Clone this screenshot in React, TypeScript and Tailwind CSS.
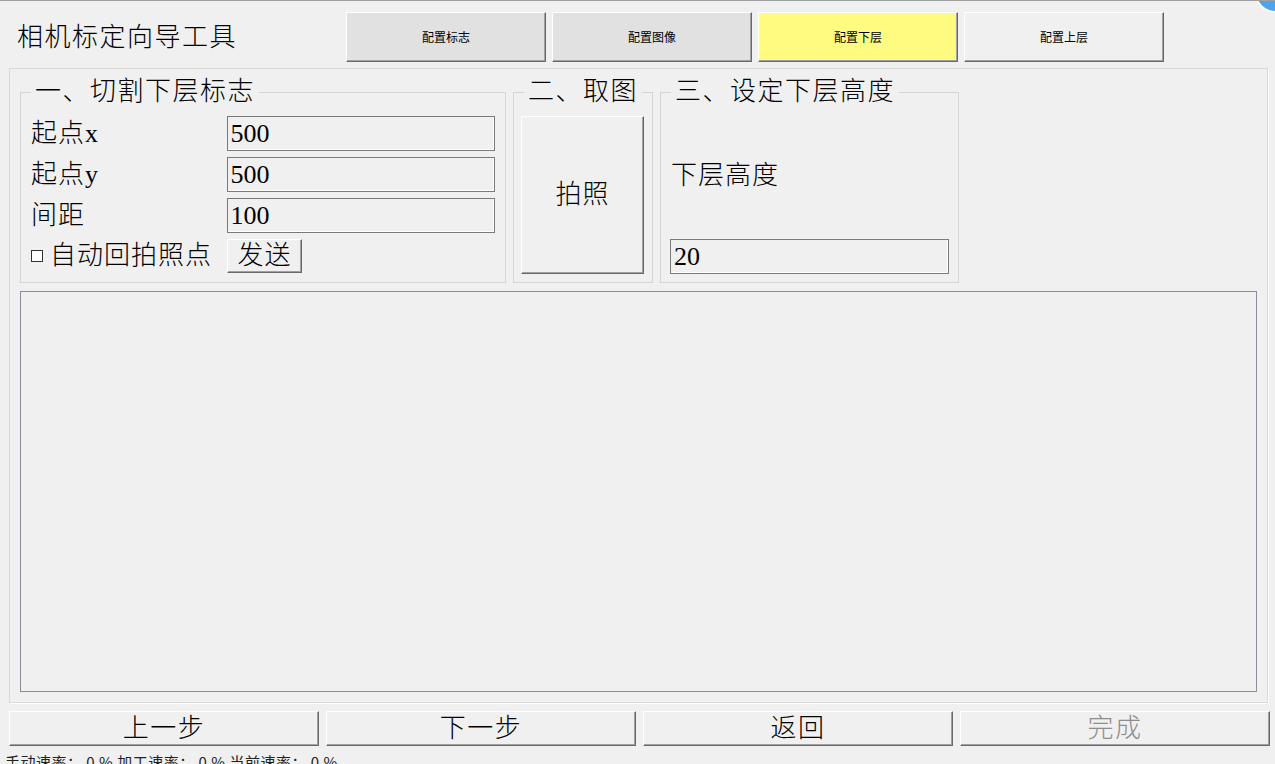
import React from 'react';

const FONT = { fontFamily: '"Liberation Serif", "Noto Sans CJK SC", serif' };
const SMALL = { fontFamily: '"Noto Sans CJK SC", "Liberation Sans", sans-serif' };

const RAISED =
  'border border-t-white border-l-white border-r-[#696969] border-b-[#696969] shadow-[inset_-1px_-1px_0_#a0a0a0]';

function TabButton({ label, active, tone }: { label: string; active?: boolean; tone: string }) {
  return (
    <button
      className={`h-[50px] w-[200px] ${RAISED} ${tone} text-[12px] leading-none text-black ${active ? 'border-r-[#6b6a3a] border-b-[#6b6a3a]' : ''}`}
      style={SMALL}
    >
      {label}
    </button>
  );
}

function TextField({ value, className = '' }: { value: string; className?: string }) {
  return (
    <div
      className={`flex h-[35px] items-center border border-[#7a7a7a] bg-[#f0f0f0] pl-[3px] text-[26px] leading-none text-black shadow-[inset_-1px_-1px_0_#fff] ${className}`}
    >
      {value}
    </div>
  );
}

function Group({ title, className = '', children }: { title: string; className?: string; children: React.ReactNode }) {
  return (
    <fieldset className={`min-w-0 border border-[#d5d5d5] ${className}`}>
      <legend className="ml-[10px] whitespace-nowrap px-[4px] text-[26px] font-light leading-[26px] tracking-[1.5px] text-black">
        {title}
      </legend>
      {children}
    </fieldset>
  );
}

const ROWS = [
  { label: '起点x', value: '500' },
  { label: '起点y', value: '500' },
  { label: '间距', value: '100' },
];

export default function App() {
  return (
    <div className="relative h-[764px] w-[1275px] overflow-hidden border-t border-[#a0a0a0] bg-[#f0f0f0]" style={FONT}>
      {/* floating blue badge, top-right */}
      <div className="absolute left-[1254px] top-[-32px] h-[44px] w-[44px] rounded-full border-2 border-white bg-[#4ca4ec]" />

      {/* Header */}
      <div className="flex items-start pt-[11px]">
        <div className="w-[346px] pl-[17px] pt-[11px] text-[26px] font-light leading-[30px] tracking-[1.5px] text-black">
          相机标定向导工具
        </div>
        <div className="flex gap-[6px]">
          <TabButton label="配置标志" tone="bg-[#e1e1e1]" />
          <TabButton label="配置图像" tone="bg-[#e1e1e1]" />
          <TabButton label="配置下层" tone="bg-[#fffa80]" active />
          <TabButton label="配置上层" tone="bg-[#f0f0f0]" />
        </div>
      </div>

      {/* Main panel */}
      <div className="ml-[9px] mt-[6px] flex h-[635px] w-[1259px] flex-col border border-[#d9d9d9] px-[10px] pb-[10px] pt-[10px] shadow-[1px_1px_0_#fff]">
        <div className="flex gap-[7px]">
          <Group title="一、切割下层标志" className="w-[486px]">
            <div className="flex flex-col gap-[6px] px-[10px] pb-[8px] pt-[11px]">
              {ROWS.map((r) => (
                <div key={r.label} className="flex items-center">
                  <span className="w-[196px] text-[26px] font-light leading-none tracking-[1px] text-black">{r.label}</span>
                  <TextField value={r.value} className="w-[269px]" />
                </div>
              ))}
              <div className="flex items-center">
                <span className="mr-[7px] h-[12px] w-[12px] border border-[#333] bg-white" />
                <span className="w-[177px] text-[26px] font-light leading-none tracking-[1px] text-black">自动回拍照点</span>
                <button className={`h-[34px] w-[75px] bg-[#f0f0f0] text-[26px] font-light leading-none tracking-[1px] text-black ${RAISED}`}>
                  发送
                </button>
              </div>
            </div>
          </Group>

          <Group title="二、取图" className="w-[140px]">
            <div className="px-[7px] pb-[8px] pt-[11px]">
              <button className={`h-[158px] w-[123px] bg-[#f0f0f0] text-[26px] font-light leading-none tracking-[1px] text-black ${RAISED}`}>
                拍照
              </button>
            </div>
          </Group>

          <Group title="三、设定下层高度" className="w-[299px]">
            <div className="flex h-[177px] flex-col justify-end px-[9px] pb-[8px]">
              <div className="mb-[50px] pl-[1px] text-[26px] font-light leading-none tracking-[1px] text-black">下层高度</div>
              <TextField value="20" className="w-[279px]" />
            </div>
          </Group>
        </div>

        {/* image area */}
        <div className="mt-[8px] flex-1 border border-[#8c8c9c]" />
      </div>

      {/* Bottom nav */}
      <div className="mt-[8px] flex gap-[7px] pl-[9px] pr-[5px]">
        {['上一步', '下一步', '返回', '完成'].map((t) => (
          <button
            key={t}
            className={`h-[35px] flex-1 bg-[#f0f0f0] text-[26px] font-light leading-none tracking-[1.5px] ${RAISED} ${t === '完成' ? 'text-[#8d8d8d]' : 'text-black'}`}
          >
            {t}
          </button>
        ))}
      </div>

      <div className="whitespace-nowrap pl-[5px] pt-[7px] text-[15px] leading-[18px] tracking-[0.5px] text-[#222]" style={SMALL}>
        手动速率： 0 % 加工速率： 0 % 当前速率： 0 %
      </div>
    </div>
  );
}
